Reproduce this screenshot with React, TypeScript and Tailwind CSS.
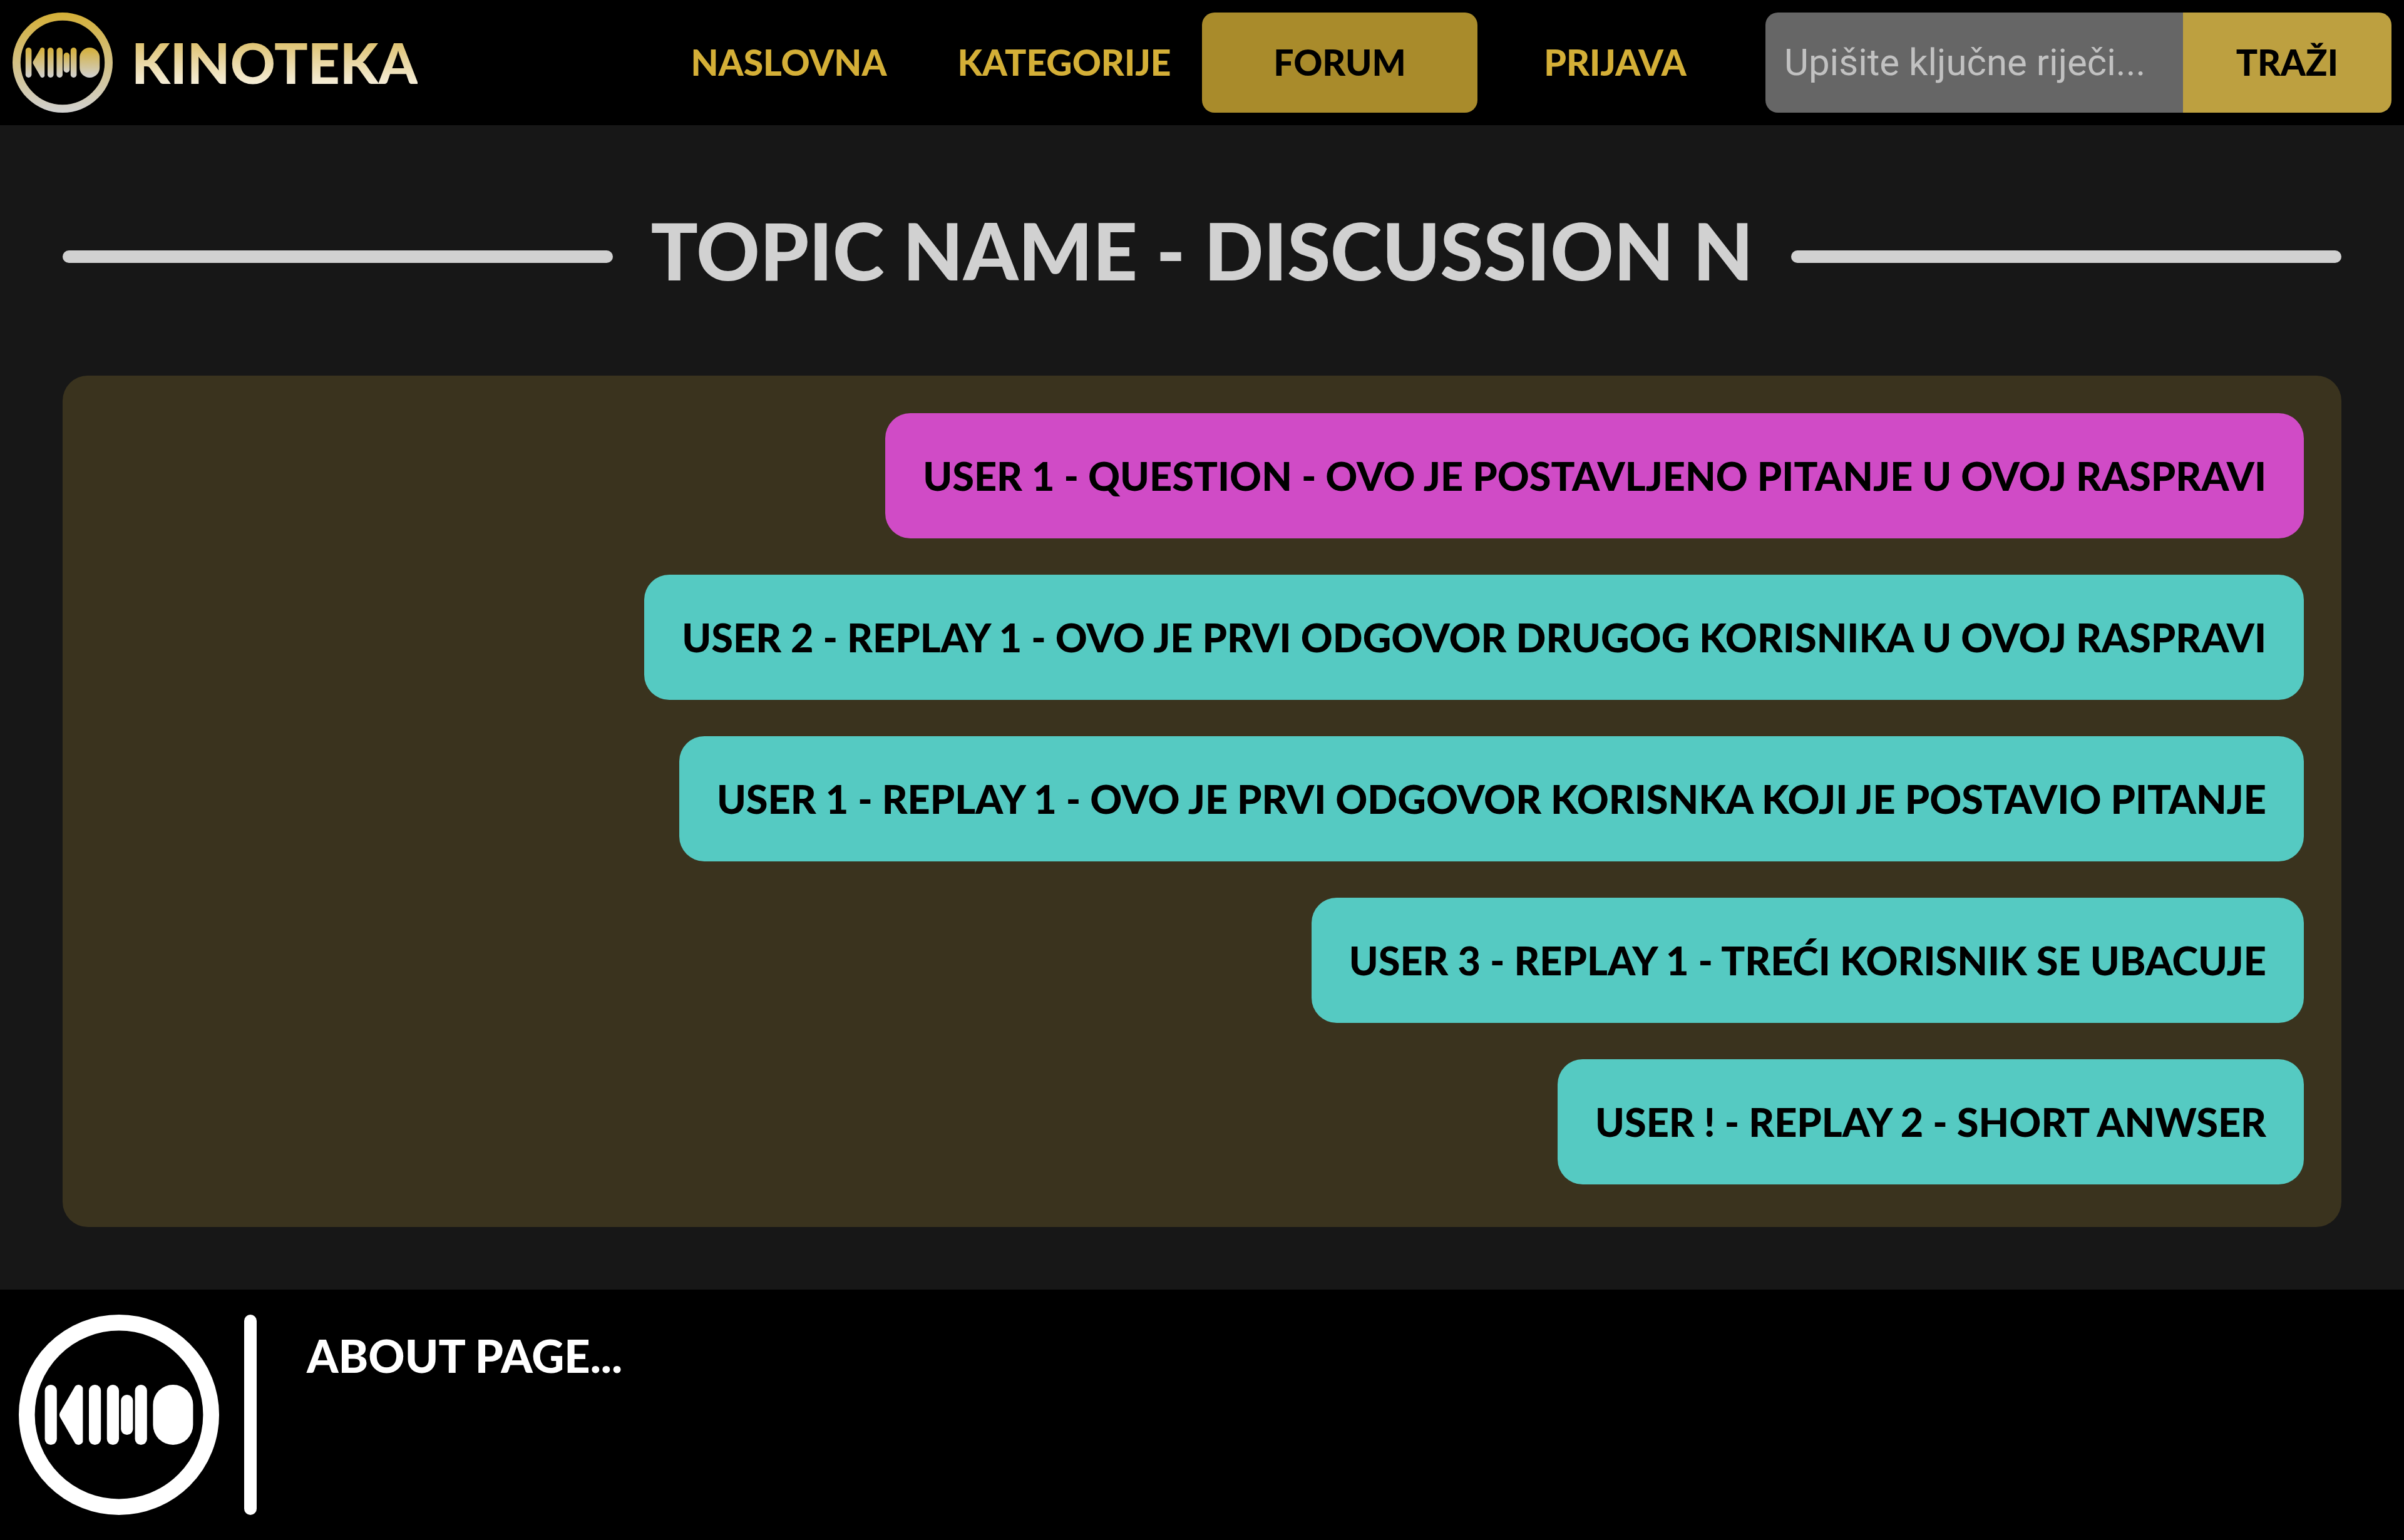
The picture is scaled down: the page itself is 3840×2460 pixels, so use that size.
import React from "react";

const navItems = [
  { label: "NASLOVNA", active: false },
  { label: "KATEGORIJE", active: false },
  { label: "FORUM", active: true },
  { label: "PRIJAVA", active: false },
];

const posts = [
  { text: "USER 1 - QUESTION - OVO JE POSTAVLJENO PITANJE U OVOJ RASPRAVI", question: true },
  { text: "USER 2 - REPLAY 1 - OVO JE PRVI ODGOVOR DRUGOG KORISNIKA U OVOJ RASPRAVI", question: false },
  { text: "USER 1 - REPLAY 1 - OVO JE PRVI ODGOVOR KORISNKA KOJI JE POSTAVIO PITANJE", question: false },
  { text: "USER 3 - REPLAY 1 - TREĆI KORISNIK SE UBACUJE", question: false },
  { text: "USER ! - REPLAY 2 - SHORT ANWSER", question: false },
];

function Emblem({ ring, fill, className }: { ring: string; fill: string; className: string }) {
  return (
    <svg viewBox="0 0 100 100" className={className} role="img" aria-label="KINO">
      <defs>
        <linearGradient id="emblem-gold" x1="0" y1="0" x2="0" y2="1">
          <stop offset="0" stopColor="#d4af37" />
          <stop offset="1" stopColor="#d1d1d1" />
        </linearGradient>
        <linearGradient id="emblem-ring" gradientUnits="userSpaceOnUse" x1="0" y1="0" x2="0" y2="100">
          <stop offset="0" stopColor="#d4af37" />
          <stop offset="1" stopColor="#d1d1d1" />
        </linearGradient>
      </defs>
      <circle cx="50" cy="50" r="46" fill="none" stroke={ring} strokeWidth="8" />
      <g fill={fill}>
        <rect x="13" y="35" width="6" height="30" rx="3" />
        <path d="M20.6 48.8 L28.1 35.8 A2.3 2.3 0 0 1 32 36.6 L32 63.4 A2.3 2.3 0 0 1 28.1 64.2 L20.6 51.2 Q20 50 20.6 48.8 Z" />
        <rect x="35" y="35" width="6" height="30" rx="3" />
        <rect x="44" y="35" width="6" height="30" rx="3" />
        <rect x="51" y="40" width="6" height="20" rx="3" />
        <rect x="58" y="35" width="6" height="30" rx="3" />
        <rect x="67" y="35" width="20" height="30" rx="10" />
      </g>
    </svg>
  );
}

function Header() {
  return (
    <header className="flex items-center gap-5 bg-black p-5">
      <a href="#" className="mr-auto flex items-center gap-[30px]">
        <Emblem ring="url(#emblem-ring)" fill="url(#emblem-gold)" className="size-40 shrink-0" />
        <span className="bg-linear-to-b from-[#d4af37] to-white bg-clip-text text-[89px] leading-[120px] text-transparent">
          KINOTEKA
        </span>
      </a>
      <nav className="flex">
        {navItems.map((item) => (
          <a
            key={item.label}
            href="#"
            aria-current={item.active ? "page" : undefined}
            className={
              item.active
                ? "flex h-40 w-110 items-center justify-center rounded-[20px] bg-[#a98b2b] text-[57px] text-black"
                : "flex h-40 w-110 items-center justify-center rounded-[20px] text-[57px] text-[#d4af37]"
            }
          >
            {item.label}
          </a>
        ))}
      </nav>
      <form className="flex h-40 w-250 overflow-hidden rounded-[20px]" onSubmit={(e) => e.preventDefault()}>
        <input
          type="text"
          aria-label="Upišite ključne riječi"
          placeholder="Upišite ključne riječi..."
          className="w-2/3 bg-[#666666] px-[30px] font-['Roboto',sans-serif] text-[60px] font-normal text-white outline-none placeholder:text-[#c1c1c1]"
        />
        <button type="submit" className="w-1/3 bg-[#bda040] text-[57px] text-black">
          TRAŽI
        </button>
      </form>
    </header>
  );
}

function Title({ children }: { children: React.ReactNode }) {
  return (
    <div className="flex h-100 items-center gap-15">
      <span className="mt-5 h-5 flex-1 rounded-full bg-[#d1d1d1]" />
      <h1 className="text-[125px] leading-none text-[#d1d1d1]">{children}</h1>
      <span className="mt-5 h-5 flex-1 rounded-full bg-[#d1d1d1]" />
    </div>
  );
}

export default function App() {
  return (
    <div className="flex min-h-screen flex-col bg-[#171717] font-['Lato',sans-serif] font-black">
      <Header />
      <main className="px-25 pb-25">
        <Title>TOPIC NAME - DISCUSSION N</Title>
        <ul className="flex flex-col items-end gap-[58px] rounded-[40px] bg-[#3a331e] px-15 pt-15 pb-17">
          {posts.map((post) => (
            <li
              key={post.text}
              className={
                post.question
                  ? "flex h-50 items-center rounded-[40px] bg-[#d04bc6] px-15 text-[63px] text-black"
                  : "flex h-50 items-center rounded-[40px] bg-[#55cac2] px-15 text-[63px] text-black"
              }
            >
              {post.text}
            </li>
          ))}
        </ul>
      </main>
      <footer className="flex grow items-start bg-black px-[30px] py-10 text-white">
        <Emblem ring="#ffffff" fill="#ffffff" className="size-80 shrink-0" />
        <span className="ml-10 h-80 w-5 shrink-0 rounded-full bg-white" />
        <p className="ml-20 pt-5 text-[72px] leading-[90px]">ABOUT PAGE...</p>
      </footer>
    </div>
  );
}
